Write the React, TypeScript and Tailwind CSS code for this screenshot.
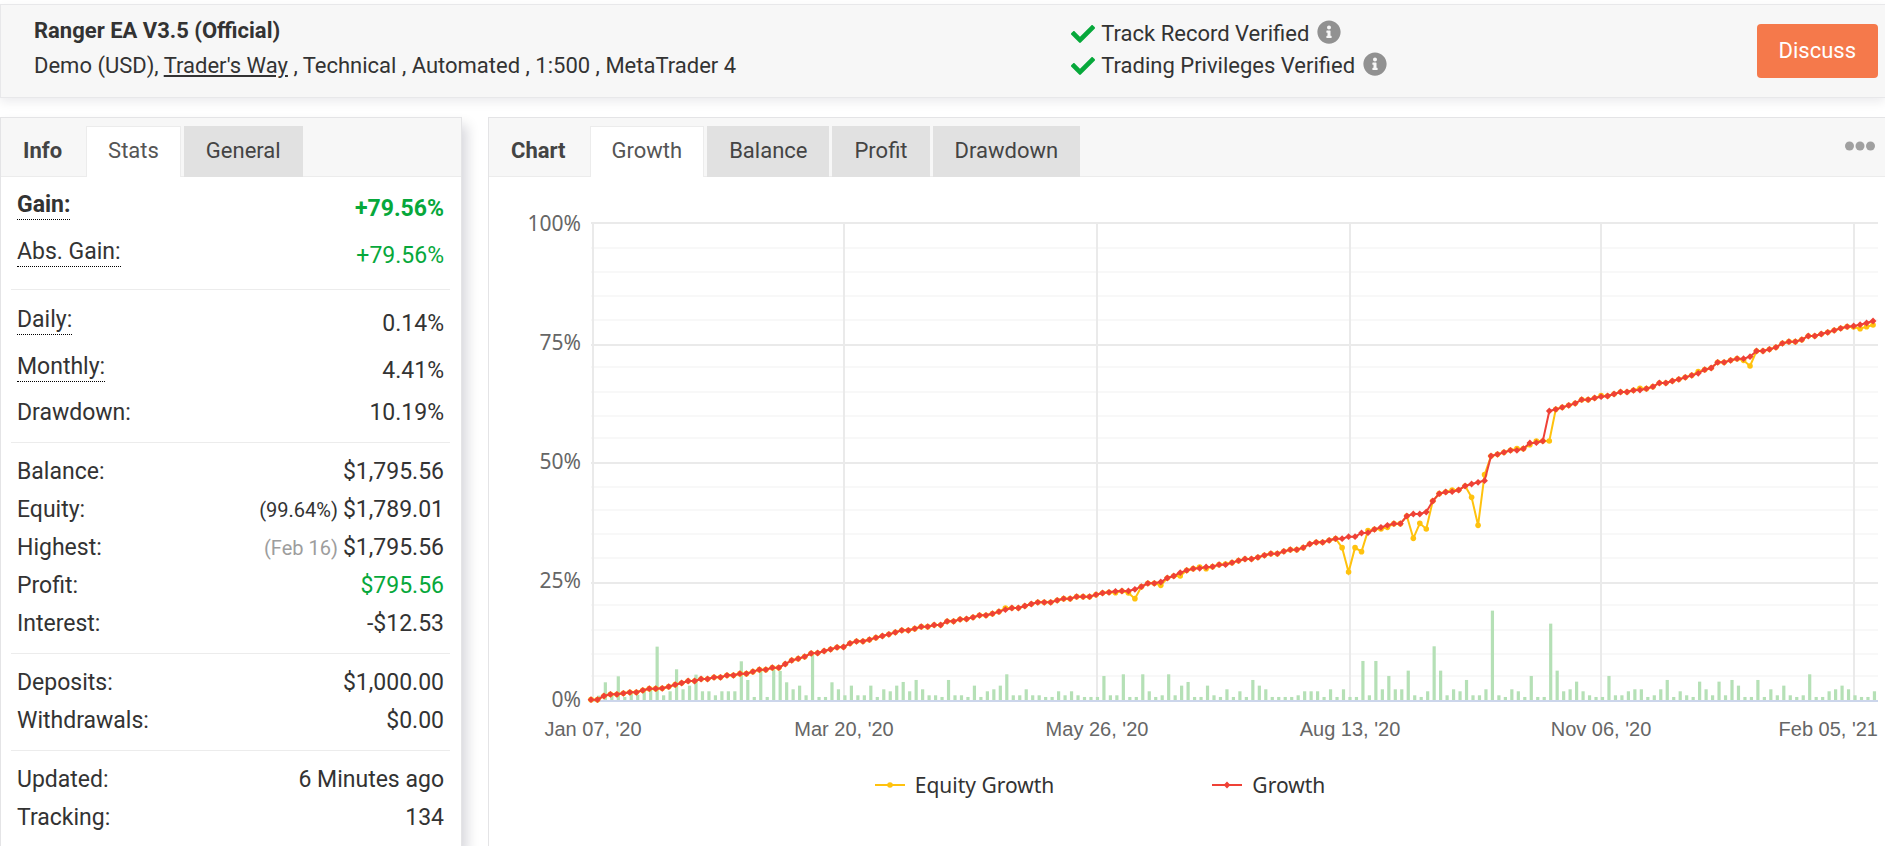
import type { ReactNode } from "react";
import { FaCheck, FaInfoCircle } from "react-icons/fa";

// ─── Account stats ────────────────────────────────────────────────────────────
type Stat = {
  label: string;
  value: string;
  note?: string;
  noteClass?: string;
  labelClass?: string;
  valueClass?: string;
  hint?: boolean;
};

const STAT_GROUPS: Stat[][] = [
  [
    {
      label: "Gain:",
      value: "+79.56%",
      labelClass: "font-bold",
      valueClass: "font-bold text-[#07a83b]",
      hint: true,
    },
    { label: "Abs. Gain:", value: "+79.56%", valueClass: "text-[#07a83b]", hint: true },
  ],
  [
    { label: "Daily:", value: "0.14%", hint: true },
    { label: "Monthly:", value: "4.41%", hint: true },
    { label: "Drawdown:", value: "10.19%" },
  ],
  [
    { label: "Balance:", value: "$1,795.56" },
    { label: "Equity:", value: "$1,789.01", note: "(99.64%)", noteClass: "text-[#333]" },
    { label: "Highest:", value: "$1,795.56", note: "(Feb 16)", noteClass: "text-[#9d9d9d]" },
    { label: "Profit:", value: "$795.56", valueClass: "text-[#07a83b]" },
    { label: "Interest:", value: "-$12.53" },
  ],
  [
    { label: "Deposits:", value: "$1,000.00" },
    { label: "Withdrawals:", value: "$0.00" },
  ],
  [
    { label: "Updated:", value: "6 Minutes ago" },
    { label: "Tracking:", value: "134" },
  ],
];

// ─── Chart series (1434 units = 100%) ─────────────────────────────────────────
const GROWTH = [
  4, 4, 15, 20, 20, 23, 26, 26, 32, 37, 37, 38, 43, 49, 54, 60, 60, 66, 66, 71,
  71, 77, 77, 82, 82, 88, 94, 94, 100, 100, 111, 122, 127, 133, 143, 144, 150, 155, 161, 162,
  173, 179, 179, 184, 190, 195, 200, 206, 212, 212, 217, 223, 223, 228, 228, 239, 239, 245, 246, 251,
  257, 257, 262, 268, 274, 279, 279, 285, 291, 296, 296, 296, 302, 307, 307, 313, 313, 313, 319, 324,
  326, 329, 330, 330, 335, 343, 353, 353, 357, 369, 375, 385, 392, 397, 398, 402, 403, 409, 409, 415,
  421, 426, 426, 431, 437, 442, 442, 449, 454, 454, 460, 471, 476, 476, 482, 487, 487, 493, 493, 504,
  505, 515, 521, 527, 532, 532, 555, 561, 561, 567, 600, 622, 627, 628, 633, 645, 651, 656, 661, 735,
  740, 746, 752, 752, 757, 774, 775, 780, 870, 875, 881, 887, 893, 904, 904, 909, 913, 915, 921, 927,
  927, 932, 933, 937, 943, 954, 954, 960, 965, 971, 977, 983, 994, 999, 1016, 1016, 1022, 1027, 1027, 1033,
  1050, 1050, 1055, 1061, 1073, 1078, 1078, 1084, 1095, 1095, 1101, 1106, 1112, 1118, 1123, 1125, 1129, 1134, 1140,
];

// Equity follows growth except on the days listed here
const EQUITY_CHANGES: Record<number, number> = {
  64: 279, 81: 325, 83: 324, 84: 307, 88: 347, 91: 375, 94: 402, 95: 397, 98: 411,
  116: 460, 117: 387, 118: 460, 119: 448, 120: 511, 122: 516, 123: 521,
  127: 488, 128: 533, 129: 516, 133: 633, 136: 611, 137: 527, 138: 679,
  143: 757, 145: 769, 146: 780, 148: 780, 156: 916, 162: 938, 171: 988,
  178: 1022, 179: 1005, 195: 1122, 196: 1117, 197: 1123, 198: 1128,
};
const EQUITY = GROWTH.map((v, i) => EQUITY_CHANGES[i] ?? v);

const BARS = [
  0, 14, 54, 18, 72, 10, 20, 16, 28, 33, 161, 15, 27, 93, 33, 44, 77, 27, 27, 15,
  27, 27, 27, 117, 61, 10, 90, 10, 92, 88, 54, 33, 44, 15, 137, 10, 10, 54, 33, 15,
  44, 15, 15, 44, 10, 33, 27, 44, 55, 27, 61, 33, 15, 15, 10, 61, 15, 15, 10, 44,
  10, 27, 33, 44, 78, 15, 15, 33, 15, 15, 10, 10, 27, 15, 27, 15, 10, 10, 10, 73,
  15, 15, 78, 10, 10, 78, 27, 10, 15, 78, 15, 44, 55, 10, 10, 44, 15, 10, 33, 10,
  27, 10, 61, 44, 33, 10, 10, 10, 10, 15, 27, 27, 27, 10, 33, 10, 33, 10, 10, 118,
  15, 118, 33, 73, 33, 33, 89, 15, 10, 27, 162, 89, 15, 33, 27, 61, 15, 15, 33, 269,
  15, 10, 33, 27, 10, 73, 10, 10, 230, 89, 27, 33, 56, 27, 15, 10, 10, 73, 15, 15,
  27, 33, 33, 10, 15, 33, 61, 10, 27, 15, 10, 56, 33, 15, 56, 15, 61, 44, 10, 10,
  61, 10, 33, 15, 44, 15, 10, 15, 78, 10, 10, 27, 33, 44, 33, 15, 10, 10, 27,
];

const BASE = 524;
const LEFT = 102;
const RIGHT = 1389;
const px = (i: number) => LEFT + i * 6.475;
const py = (v: number) => BASE - v / 3;
const linePath = (data: number[]) =>
  data.map((v, i) => `${i ? "L" : "M"}${px(i)} ${py(v)}`).join("");

const Y_LABELS = ["100%", "75%", "50%", "25%", "0%"];
const MAJOR_LINES = [46, 168, 286, 406, 524];
const MINOR_LINES = [71, 95, 119, 143, 190, 215, 239, 261, 310, 333, 357, 381, 428, 453, 477, 499];

const X_TICKS = [
  { label: "Jan 07, '20", x: 104 },
  { label: "Mar 20, '20", x: 355 },
  { label: "May 26, '20", x: 608 },
  { label: "Aug 13, '20", x: 861 },
  { label: "Nov 06, '20", x: 1112 },
  { label: "Feb 05, '21", x: 1365 },
];

function GrowthChart() {
  return (
    <svg viewBox="0 0 1396 568" className="block w-full h-auto" role="img" aria-label="Growth chart">
      {MINOR_LINES.map((y) => (
        <path key={y} d={`M${LEFT} ${y}H${RIGHT}`} stroke="#f8f8f8" strokeWidth="2" />
      ))}
      {MAJOR_LINES.map((y) => (
        <path key={y} d={`M${LEFT} ${y}H${RIGHT}`} stroke="#eaeaea" strokeWidth="2" />
      ))}
      {X_TICKS.map(({ x }) => (
        <path key={x} d={`M${x} 46V${BASE}`} stroke="#eaeaea" strokeWidth="2" />
      ))}

      {BARS.map((v, i) => (
        <rect key={i} x={px(i) - 0.2} y={py(v) - 0.7} width="3.2" height={v / 3 + 0.7} fill="#b5e0b6" />
      ))}
      <path d={`M${LEFT} ${BASE}H${RIGHT}`} stroke="#ccd6eb" strokeWidth="2" />

      <path d={linePath(EQUITY)} fill="none" stroke="#ffc20e" strokeWidth="2" />
      {EQUITY.map((v, i) => (
        <circle key={i} cx={px(i)} cy={py(v)} r="2.8" fill="#ffc20e" />
      ))}
      <path d={linePath(GROWTH)} fill="none" stroke="#ef4136" strokeWidth="2" />
      {GROWTH.map((v, i) => (
        <path key={i} d={`M${px(i)} ${py(v) - 3.4}l3.4 3.4l-3.4 3.4l-3.4 -3.4z`} fill="#ef4136" />
      ))}

      <g fill="#666" fontSize="21" fontFamily="'Noto Sans', sans-serif" textAnchor="end">
        {Y_LABELS.map((label, i) => (
          <text key={label} x="92" y={54 + i * 119}>
            {label}
          </text>
        ))}
      </g>
      <g fill="#666" fontSize="20" fontFamily="'Liberation Sans', Arial, sans-serif">
        {X_TICKS.map(({ label, x }, i) => {
          const last = i === X_TICKS.length - 1;
          return (
            <text key={label} x={last ? RIGHT : x} y="559" textAnchor={last ? "end" : "middle"}>
              {label}
            </text>
          );
        })}
      </g>
    </svg>
  );
}

function Tab({ active, children }: { active?: boolean; children: ReactNode }) {
  return (
    <button
      type="button"
      className={
        active
          ? "h-[51px] px-[21px] pb-0.5 bg-white text-[#555] border border-b-0 border-[#ececec]"
          : "h-[51px] px-[22px] pb-0.5 bg-[#e1e1e1] text-[#444]"
      }
    >
      {children}
    </button>
  );
}

function TabBar({ title, tabs, children }: { title: string; tabs: string[]; children?: ReactNode }) {
  return (
    <div className="flex items-end h-[59px] bg-[#f7f7f7] text-[22px] shadow-[inset_0_-1px_0_#ececec]">
      <h2 className="h-[51px] pl-[22px] pr-6 pb-0.5 flex items-center font-bold text-[#444]">{title}</h2>
      <div className="flex gap-[3px]">
        {tabs.map((tab, i) => (
          <Tab key={tab} active={i === 0}>
            {tab}
          </Tab>
        ))}
      </div>
      {children}
    </div>
  );
}

function StatRow({ label, value, note, noteClass, labelClass, valueClass, hint }: Stat) {
  return (
    <div className={`flex items-center justify-between px-1.5 ${hint ? "h-[47px]" : "h-[38px]"}`}>
      <dt
        className={`${labelClass ?? ""} ${hint ? "mb-2 pt-0.5 leading-7 border-b border-dotted border-black" : ""}`}
      >
        {label}
      </dt>
      <dd className={valueClass}>
        {note && <span className={`text-[20px] ${noteClass}`}>{note} </span>}
        {value}
      </dd>
    </div>
  );
}

function Verified({ children }: { children: ReactNode }) {
  return (
    <li className="flex items-center h-8">
      <FaCheck className="size-6 mr-1.5 text-[#07a83b]" />
      {children}
      <FaInfoCircle className="size-6 ml-2 mb-1 text-[#919191]" />
    </li>
  );
}

export default function App() {
  return (
    <div className="min-h-screen flex flex-col pt-1 bg-white overflow-x-hidden font-['Roboto',sans-serif] text-[23px] leading-[30px] text-[#333]">
      {/* ── Account header ── */}
      <header className="grid grid-cols-[9fr_7fr] h-[94px] pl-[33px] pr-[7px] bg-[#f7f7f7] border border-r-0 border-[#e8e8ea] text-[22px] shadow-[0_4px_10px_rgba(0,0,40,0.08)]">
        <div className="pt-[11px]">
          <h1 className="font-bold">Ranger EA V3.5 (Official)</h1>
          <p className="mt-[5px]">
            Demo (USD),{" "}
            <a href="#broker" className="underline underline-offset-2">
              Trader's Way
            </a>{" "}
            , Technical , Automated , 1:500 , MetaTrader 4
          </p>
        </div>
        <div className="flex justify-between">
          <ul className="pt-[13px]">
            <Verified>Track Record Verified</Verified>
            <Verified>Trading Privileges Verified</Verified>
          </ul>
          <button type="button" className="mt-[19px] h-[54px] px-[22px] rounded bg-[#f5794b] text-white">
            Discuss
          </button>
        </div>
      </header>

      <main className="flex-1 flex gap-[26px] mt-[19px]">
        {/* ── Info panel ── */}
        <section className="w-[462px] shrink-0 border border-b-0 border-[#e4e4e6] shadow-[5px_8px_12px_rgba(0,0,40,0.16)]">
          <TabBar title="Info" tabs={["Stats", "General"]} />
          <div className="pl-2.5 pr-[11px] pt-2">
            {STAT_GROUPS.map((group, i) => (
              <dl key={i} className={i ? "pt-2.5 pb-2.5 border-t border-[#ececec]" : "pb-2.5"}>
                {group.map((stat) => (
                  <StatRow key={stat.label} {...stat} />
                ))}
              </dl>
            ))}
          </div>
        </section>

        {/* ── Chart panel ── */}
        <section className="flex-1 min-w-0 border-l border-t border-[#e4e4e6]">
          <TabBar title="Chart" tabs={["Growth", "Balance", "Profit", "Drawdown"]}>
            <button type="button" aria-label="More options" className="ml-auto mr-2.5 mb-[26px]">
              <svg viewBox="0 0 30 10" className="block w-[30px] h-2.5" fill="#a0a0a0">
                <circle cx="4.5" cy="5" r="4.5" />
                <circle cx="15" cy="5" r="4.5" />
                <circle cx="25.5" cy="5" r="4.5" />
              </svg>
            </button>
          </TabBar>
          <GrowthChart />
          <div className="flex justify-center gap-[158px] pt-[25px] pr-[174px] font-['Noto_Sans',sans-serif] text-[21px]">
            <span className="flex items-center gap-2.5">
              <svg viewBox="0 0 30 8" className="w-[30px] h-2">
                <path d="M0 4H30" stroke="#ffc20e" strokeWidth="2" />
                <circle cx="15" cy="4" r="2.8" fill="#ffc20e" />
              </svg>
              Equity Growth
            </span>
            <span className="flex items-center gap-2.5">
              <svg viewBox="0 0 30 8" className="w-[30px] h-2">
                <path d="M0 4H30" stroke="#ef4136" strokeWidth="2" />
                <path d="M15 0.6l3.4 3.4l-3.4 3.4l-3.4 -3.4z" fill="#ef4136" />
              </svg>
              Growth
            </span>
          </div>
        </section>
      </main>
    </div>
  );
}
